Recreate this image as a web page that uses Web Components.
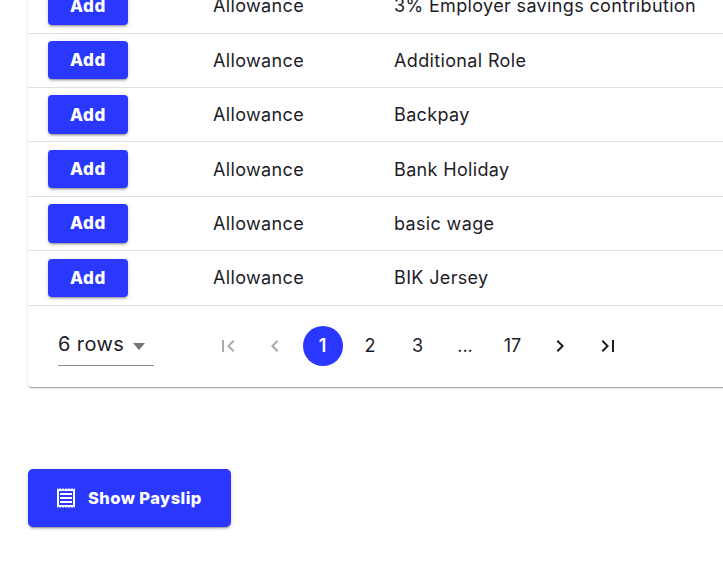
<!DOCTYPE html>
<html><head><meta charset="utf-8"><style>
html,body{margin:0;height:100%;overflow:hidden;background:#fff}
body{font-family:Inter,"Liberation Sans",sans-serif;color:#1c1c28;width:723px;height:562px}
main{display:block;padding:0 0 0 28px;margin-top:-20.8px;width:800px}
</style></head><body><main>
<pay-table>
<pay-row kind="Allowance" name="3% Employer savings contribution"></pay-row>
<pay-row kind="Allowance" name="Additional Role"></pay-row>
<pay-row kind="Allowance" name="Backpay"></pay-row>
<pay-row kind="Allowance" name="Bank Holiday"></pay-row>
<pay-row kind="Allowance" name="basic wage"></pay-row>
<pay-row kind="Allowance" name="BIK Jersey"></pay-row>
<pay-pager slot="footer"></pay-pager>
</pay-table>
<show-button>Show Payslip</show-button>
</main>
<script>
const BLUE='#2a37ff';
const P={
first:'M18.41 16.59 13.82 12l4.59-4.59L17 6l-6 6 6 6zM6 6h2v12H6z',
prev:'M15.41 7.41 14 6l-6 6 6 6 1.41-1.41L10.83 12z',
next:'M10 6 8.59 7.41 13.17 12l-4.58 4.58L10 18l6-6z',
last:'M5.59 7.41 10.18 12l-4.59 4.59L7 18l6-6-6-6zM16 6h2v12h-2z',
receipt:'M19.5 3.5 18 2l-1.5 1.5L15 2l-1.5 1.5L12 2l-1.5 1.5L9 2 7.5 3.5 6 2 4.5 3.5 3 2v20l1.5-1.5L6 22l1.5-1.5L9 22l1.5-1.5L12 22l1.5-1.5L15 22l1.5-1.5L18 22l1.5-1.5L21 22V2l-1.5 1.5zM19 19.09H5V4.91h14v14.18zM6 15h12v2H6zm0-4h12v2H6zm0-4h12v2H6z'};
const svg=(d,s=24)=>`<svg width="${s}" height="${s}" viewBox="0 0 24 24" fill="currentColor" aria-hidden="true"><path d="${d}"/></svg>`;
class PayTable extends HTMLElement{constructor(){super();this.attachShadow({mode:'open'}).innerHTML=`<style>
:host{display:block;width:772px;background:#fff;border-radius:0 0 4px 4px;box-shadow:0 2px 1px -1px rgba(0,0,0,.2),0 1px 1px 0 rgba(0,0,0,.14),0 1px 3px 0 rgba(0,0,0,.12)}
</style><slot></slot><slot name="footer"></slot>`}}
class PayRow extends HTMLElement{constructor(){super();this.attachShadow({mode:'open'})}
connectedCallback(){this.shadowRoot.innerHTML=`<style>
:host{display:grid;grid-template-columns:185px 181px 1fr;align-items:center;height:54.4px;box-sizing:border-box;border-bottom:1px solid #e0e0e0;font-size:18px;letter-spacing:.35px;color:#1c1c28}
button{margin-left:20px;width:80px;height:38.4px;border:0;border-radius:4px;background:${BLUE};color:#fff;font:800 17px Inter,"Liberation Sans",sans-serif;letter-spacing:.6px;box-shadow:0 3px 1px -2px rgba(0,0,0,.2),0 2px 2px 0 rgba(0,0,0,.14),0 1px 5px 0 rgba(0,0,0,.12);padding:0}
</style><div><button>Add</button></div><div>${this.getAttribute('kind')}</div><div>${this.getAttribute('name')}</div>`}}
class PayPager extends HTMLElement{constructor(){super();const b=(c,cls='')=>`<span class="b ${cls}">${c}</span>`;this.attachShadow({mode:'open'}).innerHTML=`<style>
:host{display:flex;align-items:center;height:81px;font-size:18px;color:#1c1c28}
.sel{margin-left:30px;width:96px;height:40px;box-sizing:border-box;border-bottom:1px solid #8a8a8a;display:flex;align-items:center;font-size:20px;letter-spacing:.4px;padding-bottom:4px}
.arrow{width:0;height:0;border:6.5px solid transparent;border-top:7px solid #757575;border-bottom:0;margin-left:9px;margin-top:5px}
nav{display:flex;gap:7.5px;margin-left:53.5px}
.b{width:40px;height:40px;box-sizing:border-box;padding-bottom:1px;border-radius:50%;display:flex;align-items:center;justify-content:center;flex:none}
.off{color:#a9a9a9}.on{background:${BLUE};color:#fff;font-weight:600}
</style><div class="sel"><span>6 rows</span><i class="arrow"></i></div><nav>${b(svg(P.first),'off')}${b(svg(P.prev),'off')}${b('1','on')}${b('2')}${b('3')}${b('...')}${b('17')}${b(svg(P.next))}${b(svg(P.last))}</nav>`}}
class ShowButton extends HTMLElement{constructor(){super();this.attachShadow({mode:'open'}).innerHTML=`<style>
:host{display:inline-flex;align-items:center;margin-top:82px;width:203px;height:58px;box-sizing:border-box;padding-left:26px;gap:10px;background:${BLUE};color:#fff;border-radius:5px;font-weight:800;font-size:16.5px;letter-spacing:.42px;box-shadow:0 3px 1px -2px rgba(0,0,0,.2),0 2px 2px 0 rgba(0,0,0,.14),0 1px 5px 0 rgba(0,0,0,.12)}
</style>${svg(P.receipt)}<slot></slot>`}}
customElements.define('pay-table',PayTable);
customElements.define('pay-row',PayRow);
customElements.define('pay-pager',PayPager);
customElements.define('show-button',ShowButton);
</script></body></html>
